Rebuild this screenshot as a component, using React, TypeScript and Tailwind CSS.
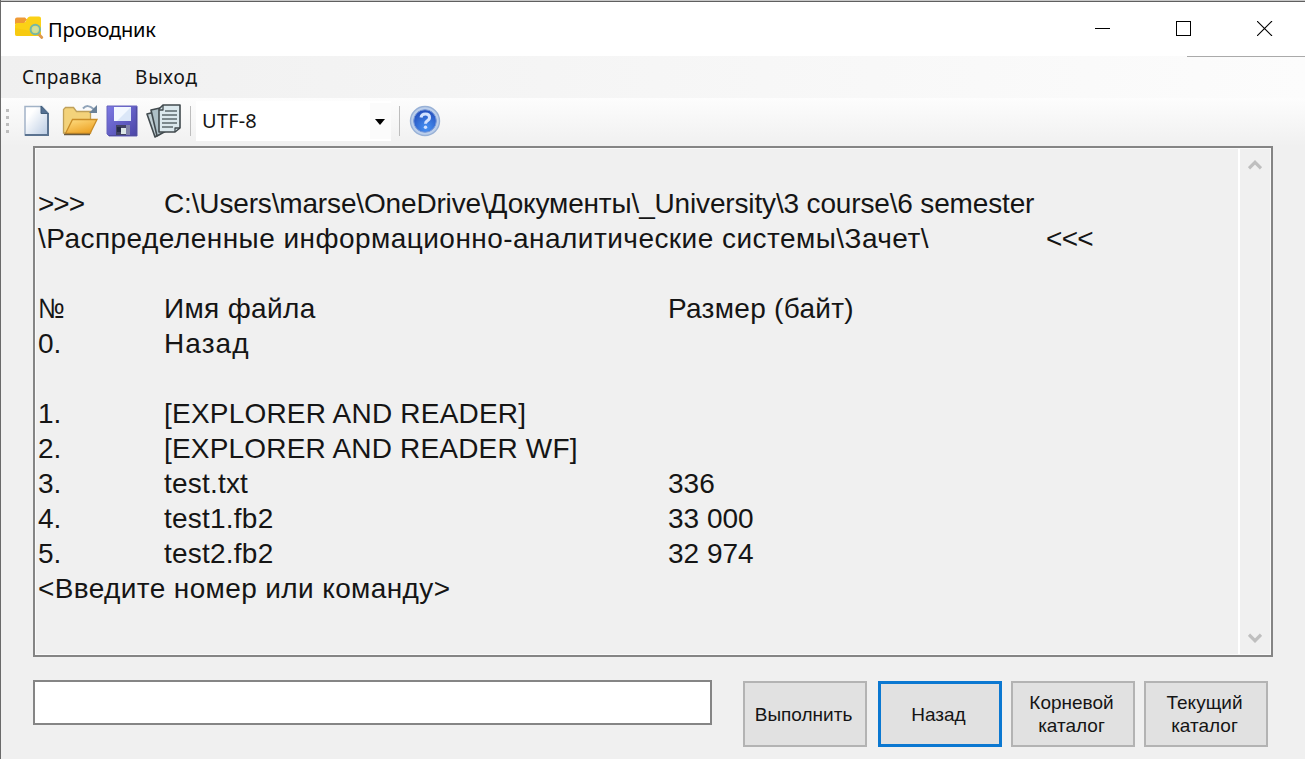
import type { ReactNode } from 'react';

function FolderSearchIcon() {
  return (
    <svg width="29" height="25" viewBox="0 0 29 25">
      <path d="M0 7V3.500Q0 1.500 2 1.500h8l3 3h-2L9 8H0z" fill="#ef9a36" />
      <path d="M0 9Q0 7 2 7h6.500Q10 7 11 5L12.500 2Q13.500 .500 15 .500h9Q26 .500 26 2.500V18q0 2-2 2H2q-2 0-2-2z" fill="#fbd116" />
      <path d="M0 12v6q0 2 2 2h22q2 0 2-2v-1z" fill="#f5c50e" opacity=".6" />
      <path d="M24 18.500l2.800 3" stroke="#df9a4c" strokeWidth="2.800" strokeLinecap="round" />
      <circle cx="20.300" cy="13.500" r="4.700" fill="#d8dc86" stroke="#74b7a5" strokeWidth="2" />
      <circle cx="20.300" cy="13.500" r="2.500" fill="#cfe0a0" />
    </svg>
  );
}

function NewIcon() {
  return (
    <svg width="28" height="34" viewBox="0 0 28 34">
      <defs>
        <linearGradient id="page" x1="0" y1="0" x2="1" y2="1">
          <stop offset=".25" stopColor="#fff" />
          <stop offset="1" stopColor="#b9cbe3" />
        </linearGradient>
      </defs>
      <path d="M2 2.500h17l6 6.500v22H2z" fill="url(#page)" stroke="#a2b3c7" strokeWidth="1.500" />
      <path d="M25 9v22H2" fill="none" stroke="#5b7390" strokeWidth="2" />
      <path d="M18 2v7.500h7z" fill="#557193" stroke="#425f7d" />
    </svg>
  );
}

function OpenIcon() {
  return (
    <svg width="38" height="34" viewBox="0 0 38 34">
      <defs>
        <linearGradient id="folder" x1="0" y1="0" x2=".6" y2="1">
          <stop stopColor="#ffdf85" />
          <stop offset="1" stopColor="#eda326" />
        </linearGradient>
      </defs>
      <path d="M1.500 29V5.500l2-2h8l3 4h14V29z" fill="#f3d27a" stroke="#bfa059" strokeWidth="1.300" />
      <path d="M3.500 29.500L10.500 15.500h24.500L28 29.500z" fill="url(#folder)" stroke="#c98c26" strokeWidth="1.300" />
      <path d="M2 30.500h26" stroke="#695b40" strokeWidth="1.500" />
      <path d="M21 4.500q4.500-5 10.500.500" fill="none" stroke="#8fa3b9" strokeWidth="2" />
      <path d="M35 1v8h-8z" fill="#6a8199" />
    </svg>
  );
}

function SaveIcon() {
  return (
    <svg width="32" height="32" viewBox="0 0 32 32">
      <defs>
        <linearGradient id="disk" x1="0" y1="0" x2="1" y2="1">
          <stop stopColor="#7d7ae4" />
          <stop offset="1" stopColor="#4b45a7" />
        </linearGradient>
      </defs>
      <path d="M1 1h30v30H3l-2-2z" fill="url(#disk)" stroke="#6663bc" />
      <path d="M30.500 2v28.500H3" fill="none" stroke="#504d9f" strokeWidth="1.200" />
      <path d="M8 2h17v14H8z" fill="#f3f8ff" />
      <path d="M25 2v14H11z" fill="#dbe7f8" />
      <path d="M10 20h14v10H10z" fill="#434365" />
      <path d="M11 22h4v5h-4z" fill="#252b46" />
      <path d="M15 23h6v6h-6z" fill="#dce7e6" />
      <path d="M20 20h4v10h-4z" fill="#8082a9" />
    </svg>
  );
}

function PagesIcon() {
  return (
    <svg width="36" height="36" viewBox="0 0 36 36" stroke="#414a4e" strokeWidth="1.600" strokeLinejoin="round">
      <path d="M1 11l8-2 6 21-6 4z" fill="#c2d0d5" />
      <path d="M5 7l9-2 6 23-9 5z" fill="#adbfc6" />
      <path d="M13 6l4-4h17v23l-5 4H13z" fill="#dbe8ed" />
      <path d="M13 7h4V2M29 29v-4h5" fill="none" strokeWidth="1.300" />
      <path d="M19 8h12M16 12h15M16 16h15M16 20h15M16 24h11" fill="none" stroke="#5c686c" strokeWidth="1.500" />
    </svg>
  );
}

function HelpIcon() {
  return (
    <svg width="32" height="32" viewBox="0 0 32 32">
      <defs>
        <radialGradient id="help" cx=".55" cy=".8" r=".75">
          <stop stopColor="#4793f4" />
          <stop offset="1" stopColor="#2450be" />
        </radialGradient>
      </defs>
      <circle cx="16" cy="16" r="14.500" fill="#bccfeb" stroke="#98b1d6" strokeWidth="1.400" />
      <circle cx="16" cy="16" r="11.300" fill="url(#help)" stroke="#7798d8" />
      <path d="M12 12.500q.5-3.500 4.500-3.500t4 3.500q0 2.200-2.300 3.300-1.700.9-1.700 3" fill="none" stroke="#d3e2ff" strokeWidth="3" />
      <circle cx="16.500" cy="22.300" r="1.700" fill="#d3e2ff" />
    </svg>
  );
}

function Chevron({ down = false }: { down?: boolean }) {
  return (
    <svg width="14" height="12" viewBox="0 0 14 12" className={down ? 'rotate-180' : ''}>
      <path d="M1 9.300L7 3.300l6 6" fill="none" stroke="#bfbfbf" strokeWidth="3.200" />
    </svg>
  );
}

function CommandButton({ children, active = false }: { children: ReactNode; active?: boolean }) {
  return (
    <button
      className={`flex h-[66px] w-[124px] shrink-0 items-center justify-center bg-[#e1e1e1] pr-[3px] text-center text-[19px] leading-[23px] ${
        active ? 'border-[3px] border-[#0b78d1]' : 'border-2 border-[#b3b3b3]'
      }`}
    >
      {children}
    </button>
  );
}

const entries = [
  { id: '1.', name: '[EXPLORER AND READER]', size: '', spacing: 'tracking-[0.21px]' },
  { id: '2.', name: '[EXPLORER AND READER WF]', size: '', spacing: 'tracking-[0.19px]' },
  { id: '3.', name: 'test.txt', size: '336', spacing: 'tracking-[0.2px]' },
  { id: '4.', name: 'test1.fb2', size: '33 000', spacing: 'tracking-[0.23px]' },
  { id: '5.', name: 'test2.fb2', size: '32 974', spacing: 'tracking-[0.23px]' },
];

interface RowProps {
  id: ReactNode;
  name: string;
  size?: ReactNode;
  spacing?: string;
}

function Row({ id, name, size, spacing = '' }: RowProps) {
  return (
    <div className="grid h-[35px] grid-cols-[126px_504px_1fr]">
      <span>{id}</span>
      <span className={spacing}>{name}</span>
      <span>{size}</span>
    </div>
  );
}

export default function App() {
  return (
    <div className="flex h-[759px] w-[1305px] flex-col overflow-hidden border-l border-[#6a6a6a] bg-[#f0f0f0] font-['Liberation_Sans',sans-serif] text-[#151515]">
      <header className="flex h-14 shrink-0 items-center border-t border-[#c8c8c8] bg-white shadow-[inset_0_1px_0_#606060]">
        <div className="ml-3.5"><FolderSearchIcon /></div>
        <h1 className="ml-1 mt-0.5 font-['Noto_Sans',sans-serif] text-[20px] leading-7 tracking-[-0.15px] text-black">Проводник</h1>
        <div className="ml-auto mr-8 flex items-center gap-[66px]">
          <svg width="15" height="15" shapeRendering="crispEdges"><path d="M0 7.500h15" stroke="#000" /></svg>
          <svg width="15" height="15" shapeRendering="crispEdges"><path d="M.5.5h14v14H.5z" fill="none" stroke="#000" /></svg>
          <svg width="16" height="15"><path d="M0 0l15 15m0-15l-15 15" stroke="#000" strokeWidth="1.100" /></svg>
        </div>
      </header>
      <nav className="flex h-[42px] shrink-0 items-center bg-linear-to-r from-[#f0f0f0] to-[#fcfcfc] pl-[21px] font-['Noto_Sans',sans-serif] text-[19px]">
        <span className="w-[113px] tracking-[0.5px]">Справка</span>
        <span className="tracking-[0.8px]">Выход</span>
        <i className="mb-auto ml-auto h-px w-[118px] bg-[#aaaaaa]" />
      </nav>
      <section className="flex h-12 shrink-0 items-center bg-linear-to-b from-[#fdfdfd] to-[#f0f0f0] pb-[3px] pl-[5px]">
        <div className="flex flex-col gap-1">
          <i className="size-[3px] bg-[#bdbdbd]" />
          <i className="size-[3px] bg-[#bdbdbd]" />
          <i className="size-[3px] bg-[#bdbdbd]" />
          <i className="size-[3px] bg-[#bdbdbd]" />
        </div>
        <div className="ml-3.5"><NewIcon /></div>
        <div className="ml-[11px]"><OpenIcon /></div>
        <div className="ml-1.5"><SaveIcon /></div>
        <div className="ml-[8px]"><PagesIcon /></div>
        <i className="ml-[8px] h-[30px] w-px bg-[#bdbdbd]" />
        <div className="ml-[5px] flex h-10 w-[195px] items-center justify-between bg-white pl-1.5">
          <span className="font-['Noto_Sans',sans-serif] text-[20px] tracking-[0.2px]">UTF-8</span>
          <span className="flex h-9 w-[21px] items-center justify-center bg-[#fbfbfb] pr-0.5 pt-0.5">
            <svg width="10" height="6"><path d="M0 0h10L5 6z" fill="#000" /></svg>
          </span>
        </div>
        <i className="ml-2 h-[30px] w-px bg-[#bdbdbd]" />
        <div className="ml-[9px]"><HelpIcon /></div>
      </section>
      <main className="ml-8 flex h-[511px] w-[1240px] shrink-0 border-2 border-[#858585] shadow-[inset_1px_1px_0_#fafafa,inset_-1px_-1px_0_#fafafa]">
        <div className="h-full flex-1 pl-[3px] pt-[38px] text-[28px] leading-[35px]">
          <div className="flex h-[35px] whitespace-pre">
            <span className="w-[126px] tracking-[-1px]">&gt;&gt;&gt;</span>
            <span className="tracking-[-0.155px]">C:\Users\marse\OneDrive\Документы\_University\3 course\6 semester</span>
          </div>
          <div className="flex h-[35px] whitespace-pre">
            <span className="w-[1008px] tracking-[0.46px]">\Распределенные информационно-аналитические системы\Зачет\</span>
            <span className="tracking-[-0.7px]">&lt;&lt;&lt;</span>
          </div>
          <div className="mt-[35px]">
            <Row
              id={<span className="inline-block origin-left scale-x-[0.88]">№</span>}
              name="Имя файла"
              size={<span className="tracking-[0.3px]">Размер (байт)</span>}
              spacing="tracking-[0.35px]"
            />
            <Row id="0." name="Назад" spacing="tracking-[1.1px]" />
          </div>
          <div className="mt-[35px]">
            {entries.map((entry) => <Row key={entry.id} {...entry} />)}
          </div>
          <div className="whitespace-pre tracking-[0.38px]">&lt;Введите номер или команду&gt;</div>
        </div>
        <aside className="mb-px mr-0.5 mt-px flex w-[31px] flex-col items-center justify-between border-l-2 border-white py-2.5">
          <Chevron />
          <Chevron down />
        </aside>
      </main>
      <footer className="ml-8 mt-[23px] flex items-start">
        <input aria-label="Команда" className="h-[45px] w-[679px] border-2 border-[#858585] bg-white px-1 text-[28px] outline-none" />
        <div className="ml-[31px] mt-px flex">
          <CommandButton>Выполнить</CommandButton>
          <div className="ml-[11px]"><CommandButton active>Назад</CommandButton></div>
          <div className="ml-[9px]"><CommandButton><span>Корневой<br />каталог</span></CommandButton></div>
          <div className="ml-[9px]"><CommandButton><span>Текущий<br />каталог</span></CommandButton></div>
        </div>
      </footer>
    </div>
  );
}
